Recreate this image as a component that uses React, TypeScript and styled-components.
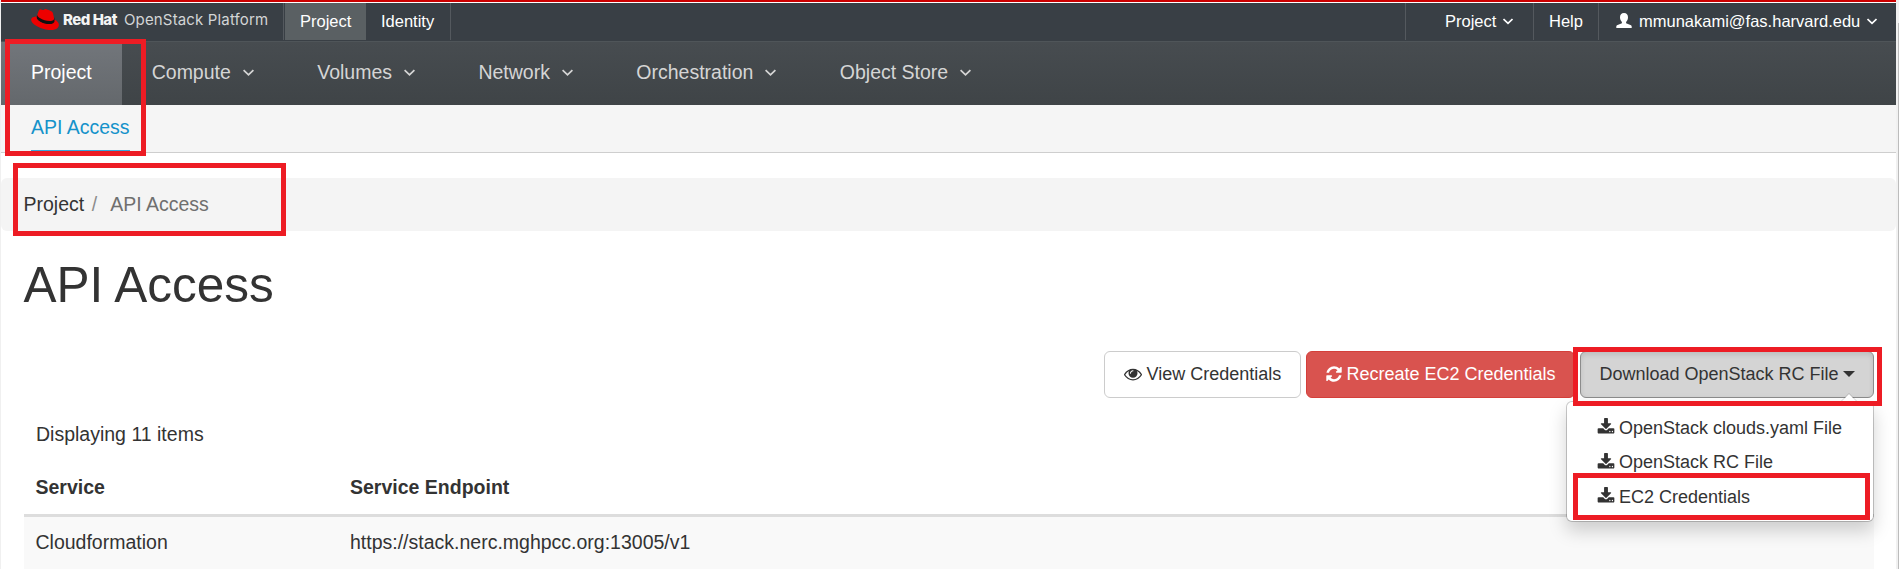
import React from "react";
import styled, { createGlobalStyle } from "styled-components";

const GlobalStyle = createGlobalStyle`
  * { box-sizing: border-box; }
  html, body { margin: 0; height: 569px; overflow: hidden; background: #fff; }
  body {
    font-family: "Liberation Sans", Arial, sans-serif;
    font-size: 19.5px;
    line-height: 28px;
    color: #333;
  }
`;

const Screen = styled.div`
  position: relative;
  display: flex;
  width: 1899px;
  height: 569px;
  overflow: hidden;
  border-left: 1px solid #f0f0f0;
`;

const Page = styled.div`
  width: 1895px;
  flex: none;
`;

const ScrollTrack = styled.div`
  flex: 1;
  padding: 23px 0 0 2px;
  background: #f1f1f1;
`;

const ScrollThumb = styled.div`
  height: 546px;
  background: #bcbcbc;
`;

const TopBar = styled.header`
  display: flex;
  height: 42px;
  border-top: 2px solid #c00;
  border-bottom: 1px solid #4f5559;
  padding-top: 1px;
  background: linear-gradient(#fff 0 1px, #393f45 1px);
  font-size: 16.5px;
  line-height: 37px;
  color: #fff;
`;

const Brand = styled.div`
  display: flex;
  width: 282px;
  padding-left: 30px;
`;

const HatSvg = styled.svg`
  width: 28px;
  height: 21px;
  margin-top: 6px;
  flex: none;
`;

const BrandText = styled.span<{ $strong?: boolean }>`
  width: ${(p) => (p.$strong ? 61 : 146)}px;
  margin-left: ${(p) => (p.$strong ? 4 : 0)}px;
  font-family: Inter, sans-serif;
  font-size: 15px;
  font-weight: ${(p) => (p.$strong ? 800 : 400)};
  color: ${(p) => (p.$strong ? "#f4f4f4" : "#d3d5d6")};
  letter-spacing: ${(p) => (p.$strong ? -0.5 : 0.15)}px;
  line-height: 34px;
  white-space: nowrap;
`;

const TopItem = styled.div<{ $width: number; $left: number; $active?: boolean; $side: "left" | "right" }>`
  display: flex;
  width: ${(p) => p.$width}px;
  height: 37px;
  padding-left: ${(p) => p.$left}px;
  border-${(p) => p.$side}: 1px solid ${(p) => (p.$active ? "transparent" : "#54595e")};
  background: ${(p) => (p.$active ? "#5a6063" : "transparent")};
  background-clip: padding-box;
  white-space: nowrap;
`;

const BrandDivider = styled.div`
  width: 2px;
  height: 37px;
  border-left: 1px solid #54595e;
`;

const Spacer = styled.div`
  flex: 1;
`;

const ChevronSvg = styled.svg<{ $w: number; $gap: number; $top: number }>`
  flex: none;
  width: ${(p) => p.$w}px;
  height: ${(p) => p.$w * 0.7}px;
  margin: ${(p) => p.$top}px 0 0 ${(p) => p.$gap}px;
`;

const UserSvg = styled.svg`
  width: 16px;
  height: 15px;
  margin: 10px 7px 0 0;
  flex: none;
`;

const NavBar = styled.nav`
  display: flex;
  height: 63px;
  background: linear-gradient(#474c50, #3f4447);
`;

const NavItem = styled.div<{ $active?: boolean }>`
  display: flex;
  height: 63px;
  padding: 0 ${(p) => (p.$active ? 30 : 33.4)}px 0 30px;
  line-height: 60px;
  white-space: nowrap;
  color: ${(p) => (p.$active ? "#fff" : "#d5d5d5")};
  background: ${(p) => (p.$active ? "linear-gradient(#72767b, #64686c)" : "none")};
`;

const SubNav = styled.div`
  display: flex;
  height: 48px;
  padding-left: 30px;
  background: #f5f5f5;
  border-bottom: 1px solid #cecece;
`;

const SubNavLink = styled.a`
  height: 47px;
  line-height: 45px;
  color: #1492ca;
  border-bottom: 2px solid #39a5dc;
`;

const Breadcrumb = styled.div`
  display: flex;
  height: 53px;
  margin-top: 25px;
  padding-left: 22.5px;
  border-radius: 6px;
  background: #f4f4f4;
  line-height: 52px;
`;

const Crumb = styled.span<{ $muted?: boolean }>`
  color: ${(p) => (p.$muted ? "#6f6f6f" : "#333")};
`;

const Slash = styled.span`
  width: 26px;
  padding-left: 7.5px;
  color: #8c8c8c;
`;

const Content = styled.main`
  padding: 0 22px 0 23px;
`;

const Title = styled.h1`
  margin: 0 0 0 -0.5px;
  height: 120px;
  padding-top: 27px;
  font-size: 49.5px;
  font-weight: 400;
  line-height: 54px;
`;

const Actions = styled.div`
  display: flex;
  justify-content: flex-end;
  gap: 5px;
  height: 47px;
`;

const Button = styled.button<{ $kind?: "danger" | "open"; $width: number }>`
  display: flex;
  width: ${(p) => p.$width}px;
  height: 47px;
  padding: 0 0 0 ${(p) => (p.$kind === "danger" ? 17.5 : 18.5)}px;
  border: 1px solid ${(p) => (p.$kind === "danger" ? "#d43f3a" : p.$kind === "open" ? "#8c8c8c" : "#ccc")};
  border-radius: 6px;
  background: ${(p) => (p.$kind === "danger" ? "#d9534f" : p.$kind === "open" ? "#d4d4d4" : "#fff")};
  color: ${(p) => (p.$kind === "danger" ? "#fff" : "#333")};
  box-shadow: ${(p) => (p.$kind === "open" ? "inset 0 3px 5px rgba(0,0,0,.1)" : "none")};
  font: 18px/44px "Liberation Sans", Arial, sans-serif;
  white-space: nowrap;
`;

const IconSvg = styled.svg<{ $top: number; $gap: number }>`
  width: 18px;
  height: 18px;
  margin: ${(p) => p.$top}px ${(p) => p.$gap}px 0 0;
  flex: none;
`;

const CaretDown = styled.span`
  margin: 19px 0 0 4.5px;
  width: 12px;
  height: 6px;
  border: 6px solid transparent;
  border-top-color: #333;
  border-bottom: 0;
`;

const Menu = styled.div`
  position: absolute;
  top: 401px;
  left: 1565px;
  width: 308px;
  height: 121px;
  padding: 8.9px 0 0 30px;
  border: 1px solid rgba(0, 0, 0, 0.2);
  border-radius: 6px;
  background: #fff;
  background-clip: padding-box;
  box-shadow: 0 9px 18px rgba(0, 0, 0, 0.175);
  font-size: 18px;
  line-height: 34.5px;

  &::before {
    content: "";
    position: absolute;
    top: -8px;
    right: 16px;
    border: 8px solid transparent;
    border-top: 0;
    border-bottom-color: #fff;
    filter: drop-shadow(0 -1px 0 rgba(0, 0, 0, 0.15));
  }
`;

const MenuItem = styled.div`
  display: flex;
  height: 34.5px;
  white-space: nowrap;
`;

const Count = styled.div`
  padding: 22px 12px 0;
  height: 64px;
`;

const Row = styled.div<{ $head?: boolean }>`
  display: grid;
  grid-template-columns: 314.5px 1fr;
  height: ${(p) => (p.$head ? 55 : 52)}px;
  padding: 11px 11.5px 0;
  border-bottom: ${(p) => (p.$head ? "3px solid #ddd" : "0")};
  background: ${(p) => (p.$head ? "#fff" : "#f9f9f9")};
  font-weight: ${(p) => (p.$head ? 700 : 400)};
`;

const Highlight = styled.div<{ $x: number; $y: number; $w: number; $h: number }>`
  position: absolute;
  left: ${(p) => p.$x - 1}px;
  top: ${(p) => p.$y}px;
  width: ${(p) => p.$w}px;
  height: ${(p) => p.$h}px;
  border: 5px solid #ed1c24;
`;

const PATHS = {
  eye: "M1664 960q-152-236-381-353 61 104 61 225 0 185-131.5 316.5t-316.5 131.5-316.5-131.5-131.5-316.5q0-121 61-225-229 117-381 353 133 205 333.5 326.5t434.5 121.5 434.5-121.5 333.5-326.5zm-720-384q0-20-14-34t-34-14q-125 0-214.5 89.5t-89.5 214.5q0 20 14 34t34 14 34-14 14-34q0-86 61-147t147-61q20 0 34-14t14-34zm848 384q0 34-20 69-140 230-376.5 368.5t-499.5 138.5-499.5-139-376.5-368q-20-35-20-69t20-69q140-229 376.5-368t499.5-139 499.5 139 376.5 368q20 35 20 69z",
  refresh: "M1639 1056q0 5-1 7-64 268-268 434.5t-478 166.5q-146 0-282.5-55t-243.5-157l-129 129q-19 19-45 19t-45-19-19-45v-448q0-26 19-45t45-19h448q26 0 45 19t19 45-19 45l-137 137q71 66 161 102t187 36q134 0 250-65t186-179q11-17 53-117 8-23 30-23h192q13 0 22.5 9.5t9.5 22.5zm25-800v448q0 26-19 45t-45 19h-448q-26 0-45-19t-19-45 19-45l138-138q-148-137-349-137-134 0-250 65t-186 179q-11 17-53 117-8 23-30 23h-199q-13 0-22.5-9.5t-9.5-22.5v-7q65-268 270-434.5t480-166.5q146 0 284 55.5t245 156.5l130-129q19-19 45-19t45 19 19 45z",
  download: "M1344 1344q0-26-19-45t-45-19-45 19-19 45 19 45 45 19 45-19 19-45zm256 0q0-26-19-45t-45-19-45 19-19 45 19 45 45 19 45-19 19-45zm128-224v320q0 40-28 68t-68 28h-1472q-40 0-68-28t-28-68v-320q0-40 28-68t68-28h465l135 136q58 56 136 56t136-56l136-136h464q40 0 68 28t28 68zm-325-569q17 41-14 70l-448 448q-18 19-45 19t-45-19l-448-448q-31-29-14-70 17-39 59-39h256v-448q0-26 19-45t45-19h256q26 0 45 19t19 45v448h256q42 0 59 39z",
};

const Icon = ({ name, top, gap }: { name: keyof typeof PATHS; top: number; gap: number }) => (
  <IconSvg viewBox="0 0 1792 1792" $top={top} $gap={gap}>
    <path fill="currentColor" d={PATHS[name]} />
  </IconSvg>
);

const Chevron = ({ w, gap, top }: { w: number; gap: number; top: number }) => (
  <ChevronSvg viewBox="0 0 10 7" $w={w} $gap={gap} $top={top}>
    <path d="M.5 1 5 5.300 9.500 1" fill="none" stroke="currentColor" strokeWidth="1.700" />
  </ChevronSvg>
);

const Hat = () => (
  <HatSvg viewBox="0 2.9 24 18.2">
    <path
      fill="#111"
      d="M5.300 7.900 4.700 10c0 3 6 6.500 11.500 6.500 3 0 4.600-1.500 4.400-3.500l-.8-3-5 2.500z"
    />
    <path
      fill="#e00"
      d="M16.009 13.386c1.577 0 3.860-.326 3.860-2.202a1.765 1.765 0 0 0-.04-.431l-.94-4.080c-.216-.898-.406-1.305-1.982-2.093-1.223-.625-3.888-1.658-4.676-1.658-.733 0-.947.946-1.822.946-.842 0-1.467-.706-2.255-.706-.757 0-1.250.515-1.630 1.576 0 0-1.060 2.990-1.197 3.424a.81.81 0 0 0-.028.245c0 1.162 4.577 4.974 10.710 4.974m4.101-1.435c.218 1.032.218 1.140.218 1.277 0 1.765-1.984 2.745-4.593 2.745-5.895.004-11.060-3.451-11.060-5.734a2.326 2.326 0 0 1 .19-.925C2.746 9.415 0 9.794 0 12.217c0 3.969 9.405 8.861 16.851 8.861 5.710 0 7.149-2.582 7.149-4.620 0-1.605-1.387-3.425-3.887-4.512"
    />
  </HatSvg>
);

const SECTIONS = ["Compute", "Volumes", "Network", "Orchestration", "Object Store"];
const FILES = ["OpenStack clouds.yaml File", "OpenStack RC File", "EC2 Credentials"];

export default function App() {
  return (
    <>
      <GlobalStyle />
      <Screen>
        <Page>
          <TopBar>
            <Brand>
              <Hat />
              <BrandText $strong>Red Hat</BrandText>
              <BrandText>OpenStack Platform</BrandText>
            </Brand>
            <BrandDivider />
            <TopItem $side="right" $width={82} $left={15} $active>Project</TopItem>
            <TopItem $side="right" $width={84} $left={14}>Identity</TopItem>
            <Spacer />
            <TopItem $side="left" $width={128} $left={39}>
              Project
              <Chevron w={10} gap={7} top={15} />
            </TopItem>
            <TopItem $side="left" $width={65} $left={15}>Help</TopItem>
            <TopItem $side="left" $width={298} $left={17}>
              <UserSvg viewBox="0 0 16 15">
                <path fill="currentColor" d="M8 0c2.700 0 4 1.900 4 4.300 0 1.900-.8 3.600-1.900 4.600v1.400l4.300 1.700c1 .4 1.300 1 1.300 2V15H.3v-1c0-1 .3-1.600 1.300-2l4.300-1.700V8.900C4.800 7.900 4 6.200 4 4.300 4 1.900 5.300 0 8 0z" />
              </UserSvg>
              mmunakami@fas.harvard.edu
              <Chevron w={10} gap={7} top={15} />
            </TopItem>
          </TopBar>
          <NavBar>
            <NavItem $active>Project</NavItem>
            {SECTIONS.map((label) => (
              <NavItem key={label}>
                {label}
                <Chevron w={11} gap={12} top={27} />
              </NavItem>
            ))}
          </NavBar>
          <SubNav>
            <SubNavLink>API Access</SubNavLink>
          </SubNav>
          <Breadcrumb>
            <Crumb>Project</Crumb>
            <Slash>/</Slash>
            <Crumb $muted>API Access</Crumb>
          </Breadcrumb>
          <Content>
            <Title>API Access</Title>
            <Actions>
              <Button $width={197}>
                <Icon name="eye" top={13} gap={5} />
                View Credentials
              </Button>
              <Button $width={269} $kind="danger">
                <Icon name="refresh" top={13} gap={4} />
                Recreate EC2 Credentials
              </Button>
              <Button $width={294} $kind="open">
                Download OpenStack RC File
                <CaretDown />
              </Button>
            </Actions>
            <Count>Displaying 11 items</Count>
            <Row $head>
              <span>Service</span>
              <span>Service Endpoint</span>
            </Row>
            <Row>
              <span>Cloudformation</span>
              <span>https://stack.nerc.mghpcc.org:13005/v1</span>
            </Row>
          </Content>
        </Page>
        <ScrollTrack>
          <ScrollThumb />
        </ScrollTrack>
        <Menu>
          {FILES.map((label) => (
            <MenuItem key={label}>
              <Icon name="download" top={7.5} gap={4} />
              {label}
            </MenuItem>
          ))}
        </Menu>
        <Highlight $x={5} $y={39} $w={141} $h={117} />
        <Highlight $x={13} $y={163} $w={273} $h={73} />
        <Highlight $x={1573} $y={347} $w={309} $h={59} />
        <Highlight $x={1573} $y={473} $w={297} $h={47} />
      </Screen>
    </>
  );
}
